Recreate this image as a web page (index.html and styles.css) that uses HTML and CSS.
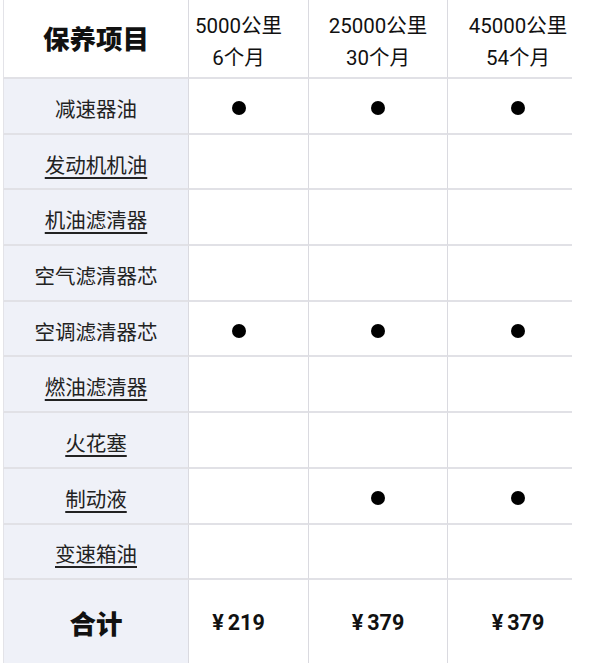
FILE: index.html
```html
<!DOCTYPE html>
<html lang="zh-CN">
<head>
<meta charset="utf-8">
<title>保养项目</title>
<link rel="stylesheet" href="styles.css">
</head>
<body>
<div class="table">
  <div class="cell head-title">保养项目</div>
  <div class="cell head c2">5000公里<br>6个月</div>
  <div class="cell head c3">25000公里<br>30个月</div>
  <div class="cell head c4">45000公里<br>54个月</div>

  <div class="cell name">减速器油</div>
  <div class="cell c2"><span class="dot"></span></div>
  <div class="cell c3"><span class="dot"></span></div>
  <div class="cell c4"><span class="dot"></span></div>

  <div class="cell name"><span class="link">发动机机油</span></div>
  <div class="cell c2"></div>
  <div class="cell c3"></div>
  <div class="cell c4"></div>

  <div class="cell name"><span class="link">机油滤清器</span></div>
  <div class="cell c2"></div>
  <div class="cell c3"></div>
  <div class="cell c4"></div>

  <div class="cell name">空气滤清器芯</div>
  <div class="cell c2"></div>
  <div class="cell c3"></div>
  <div class="cell c4"></div>

  <div class="cell name">空调滤清器芯</div>
  <div class="cell c2"><span class="dot"></span></div>
  <div class="cell c3"><span class="dot"></span></div>
  <div class="cell c4"><span class="dot"></span></div>

  <div class="cell name"><span class="link">燃油滤清器</span></div>
  <div class="cell c2"></div>
  <div class="cell c3"></div>
  <div class="cell c4"></div>

  <div class="cell name"><span class="link">火花塞</span></div>
  <div class="cell c2"></div>
  <div class="cell c3"></div>
  <div class="cell c4"></div>

  <div class="cell name"><span class="link">制动液</span></div>
  <div class="cell c2"></div>
  <div class="cell c3"><span class="dot"></span></div>
  <div class="cell c4"><span class="dot"></span></div>

  <div class="cell name"><span class="link">变速箱油</span></div>
  <div class="cell c2"></div>
  <div class="cell c3"></div>
  <div class="cell c4"></div>

  <div class="cell name total-title">合计</div>
  <div class="cell price c2">¥<span class="num">219</span></div>
  <div class="cell price c3">¥<span class="num">379</span></div>
  <div class="cell price c4">¥<span class="num">379</span></div>
</div>
</body>
</html>
```

FILE: styles.css
```css
html, body {
  margin: 0;
  padding: 0;
  background: #ffffff;
}

body {
  font-family: Roboto, "Noto Sans CJK SC", sans-serif;
  color: #1a1a1a;
  overflow: hidden;
}

.table {
  display: grid;
  grid-template-columns: 186px 120px 139px 124px;
  grid-template-rows: 79px repeat(9, 55.7px) 86px;
  margin-left: 3px;
}

.cell {
  box-sizing: border-box;
  display: flex;
  align-items: center;
  justify-content: center;
  text-align: center;
  border-bottom: 2px solid #e1e1e6;
  border-right: 1.5px solid #dadae0;
  background: #ffffff;
  font-size: 20px;
  padding-top: 4px;
}

.name, .head-title {
  border-left: 1.5px solid #e3e3e8;
}

.name {
  background: #eff1f8;
  color: #222222;
  font-family: "Noto Sans CJK SC", sans-serif;
  font-size: 20.5px;
}

.head-title {
  background: #ffffff;
  font-family: "Noto Sans CJK SC", sans-serif;
  font-weight: 900;
  font-size: 26.5px;
  color: #111111;
  padding-top: 0;
  padding-bottom: 2px;
}

.head {
  font-size: 20.5px;
  line-height: 32px;
  color: #111111;
  padding-top: 6px;
  padding-bottom: 0;
}

.c2 {
  padding-right: 20px;
}

.c4 {
  padding-left: 16px;
  border-right: none;
}

.link {
  text-decoration: underline;
  text-decoration-thickness: 1.5px;
  text-underline-offset: 4px;
}

.dot {
  display: block;
  width: 14px;
  height: 14px;
  border-radius: 50%;
  background: #000000;
}

.total-title {
  font-weight: 900;
  font-size: 26.5px;
  color: #111111;
  padding-top: 0;
  padding-bottom: 0;
}

.price {
  font-weight: 700;
  font-size: 21.5px;
  color: #111111;
  padding-top: 0;
  padding-bottom: 0;
}

.price .num {
  margin-left: 4px;
}
```
